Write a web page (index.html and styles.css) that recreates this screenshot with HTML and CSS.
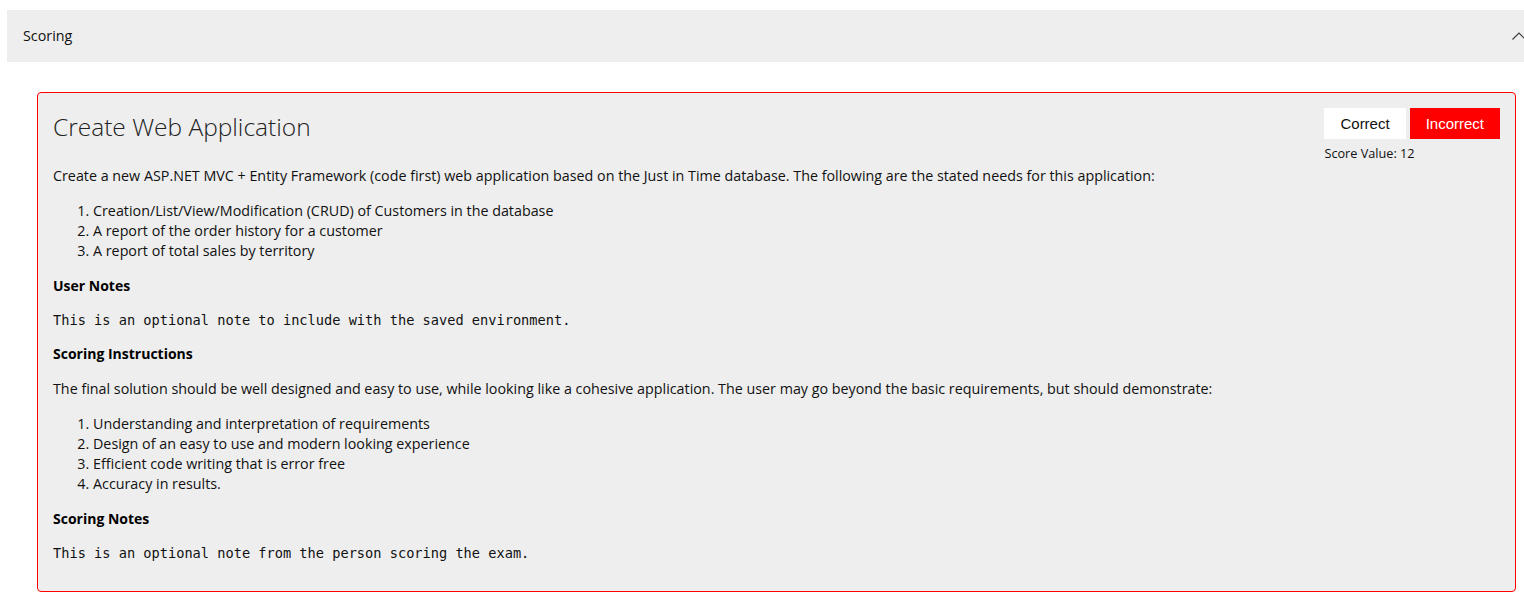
FILE: index.html
```html
<!DOCTYPE html>
<html lang="en">
<head>
<meta charset="utf-8">
<title>Scoring</title>
<link rel="stylesheet" href="styles.css">
</head>
<body>
<div class="page">
  <div class="section-header">
    <span class="section-title">Scoring</span>
    <svg class="chevron" width="14" height="8" viewBox="0 0 14 8" aria-hidden="true">
      <polyline points="0.5,7.5 7,1 13.5,7.5" fill="none" stroke="#3a3a3a" stroke-width="1.1"/>
    </svg>
  </div>

  <div class="card">
    <div class="card-head">
      <h3 class="card-title">Create Web Application</h3>
      <div class="score-box">
        <div class="score-buttons">
          <button class="btn btn-correct">Correct</button>
          <button class="btn btn-incorrect">Incorrect</button>
        </div>
        <div class="score-value">Score Value: 12</div>
      </div>
    </div>

    <p class="text">Create a new ASP.NET MVC + Entity Framework (code first) web application based on the Just in Time database. The following are the stated needs for this application:</p>
    <ol class="list">
      <li>Creation/List/View/Modification (CRUD) of Customers in the database</li>
      <li>A report of the order history for a customer</li>
      <li>A report of total sales by territory</li>
    </ol>

    <h4 class="label">User Notes</h4>
    <pre class="note">This is an optional note to include with the saved environment.</pre>

    <h4 class="label">Scoring Instructions</h4>
    <p class="text">The final solution should be well designed and easy to use, while looking like a cohesive application. The user may go beyond the basic requirements, but should demonstrate:</p>
    <ol class="list">
      <li>Understanding and interpretation of requirements</li>
      <li>Design of an easy to use and modern looking experience</li>
      <li>Efficient code writing that is error free</li>
      <li>Accuracy in results.</li>
    </ol>

    <h4 class="label">Scoring Notes</h4>
    <pre class="note">This is an optional note from the person scoring the exam.</pre>
  </div>
</div>
</body>
</html>
```
FILE: styles.css
```css
html {
  overflow: hidden;
}

body {
  margin: 0;
  background: #ffffff;
  color: #111111;
  font-family: "Open Sans", "Noto Sans", sans-serif;
  font-size: 14.3px;
  line-height: 20px;
}

.page {
  padding: 10px 0 0 7px;
  width: 1525px;
}

.section-header {
  display: flex;
  align-items: center;
  justify-content: space-between;
  height: 52px;
  padding: 0 6px 0 16px;
  background: #eeeeee;
}

.section-title {
  font-size: 14.3px;
  color: #111111;
}

.chevron {
  display: block;
  margin-top: -1px;
}

.card {
  box-sizing: border-box;
  width: 1479px;
  margin: 30px 0 0 30px;
  padding: 15px 15px 14px 15px;
  background: #eeeeee;
  border: 1px solid #ff0000;
  border-radius: 4px;
}

.card-head {
  display: flex;
  justify-content: space-between;
  align-items: flex-start;
  margin-bottom: 4px;
}

.card-title {
  margin: 0;
  padding-top: 4px;
  font-family: "Open Sans", sans-serif;
  font-weight: 300;
  font-size: 24.5px;
  line-height: 30px;
  color: #222222;
}

.score-box {
  display: flex;
  flex-direction: column;
  align-items: flex-start;
}

.score-buttons {
  display: flex;
  gap: 4px;
}

.btn {
  height: 31px;
  padding: 0 16px;
  border: none;
  border-radius: 0;
  font-family: "Liberation Sans", Arial, sans-serif;
  font-size: 15px;
  line-height: 31px;
  cursor: pointer;
}

.btn-correct {
  background: #ffffff;
  color: #111111;
}

.btn-incorrect {
  background: #ff0000;
  color: #ffffff;
}

.score-value {
  margin-top: 6px;
  font-size: 12.7px;
  line-height: 17px;
  color: #111111;
}

.text {
  margin: 0 0 15px 0;
}

.label + .text {
  padding-top: 1px;
}

.list {
  margin: 0 0 15px 0;
  padding-left: 40px;
}

.label {
  margin: 0 0 14px 0;
  font-family: "Open Sans", sans-serif;
  font-weight: 700;
  font-size: 14px;
  line-height: 20px;
  color: #000000;
}

.note {
  margin: 0 0 14px 0;
  font-family: "DejaVu Sans Mono", "Liberation Mono", monospace;
  font-size: 13.65px;
  line-height: 20px;
  color: #111111;
  white-space: pre-wrap;
}
```
